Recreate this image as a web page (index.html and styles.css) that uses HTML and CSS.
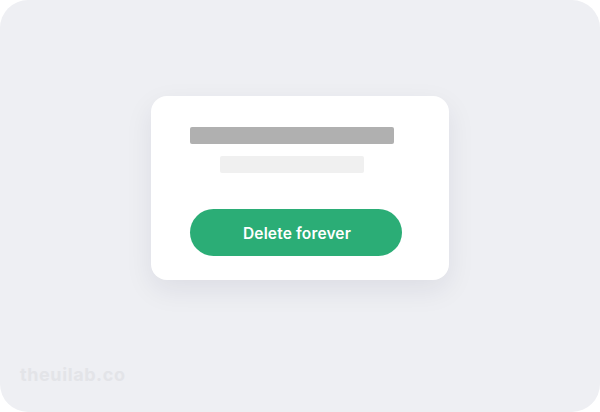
FILE: index.html
```html
<!DOCTYPE html>
<html>
<head>
<meta charset="utf-8">
<link rel="stylesheet" href="styles.css">
</head>
<body>
<div class="frame">
  <div class="card">
    <div class="bar bar-title"></div>
    <div class="bar bar-sub"></div>
    <button class="btn">Delete forever</button>
  </div>
  <div class="watermark">theuilab.co</div>
</div>
</body>
</html>
```
FILE: styles.css
```css
html, body {
  margin: 0;
  padding: 0;
  background: #ffffff;
}
.frame {
  width: 600px;
  height: 412px;
  box-sizing: border-box;
  background: #eeeff3;
  border-radius: 28px;
  padding-top: 96px;
  display: flex;
  flex-direction: column;
  font-family: Inter, "Open Sans", sans-serif;
}
.card {
  margin-left: 151px;
  width: 298px;
  height: 184px;
  box-sizing: border-box;
  background: #ffffff;
  border-radius: 16px;
  box-shadow: 0 10px 28px rgba(20, 25, 60, 0.08);
  padding: 31px 0 0 39px;
  display: flex;
  flex-direction: column;
  align-items: flex-start;
}
.bar {
  border-radius: 2px;
}
.bar-title {
  width: 204px;
  height: 17px;
  background: #b0b0b0;
}
.bar-sub {
  margin-top: 12px;
  margin-left: 30px;
  width: 144px;
  height: 17px;
  background: #f0f0f0;
}
.btn {
  margin-top: 36px;
  width: 212px;
  height: 47px;
  border: none;
  border-radius: 24px;
  background: #2bad76;
  color: #ffffff;
  font-family: Inter, "Open Sans", sans-serif;
  font-weight: 600;
  font-size: 15.5px;
  padding: 1px 0 0 2px;
  letter-spacing: 0.15px;
}
.watermark {
  margin-top: 84px;
  margin-left: 20px;
  font-size: 18px;
  font-weight: 700;
  color: #e3e4e8;
  line-height: 22px;
  letter-spacing: 0.6px;
}
```
